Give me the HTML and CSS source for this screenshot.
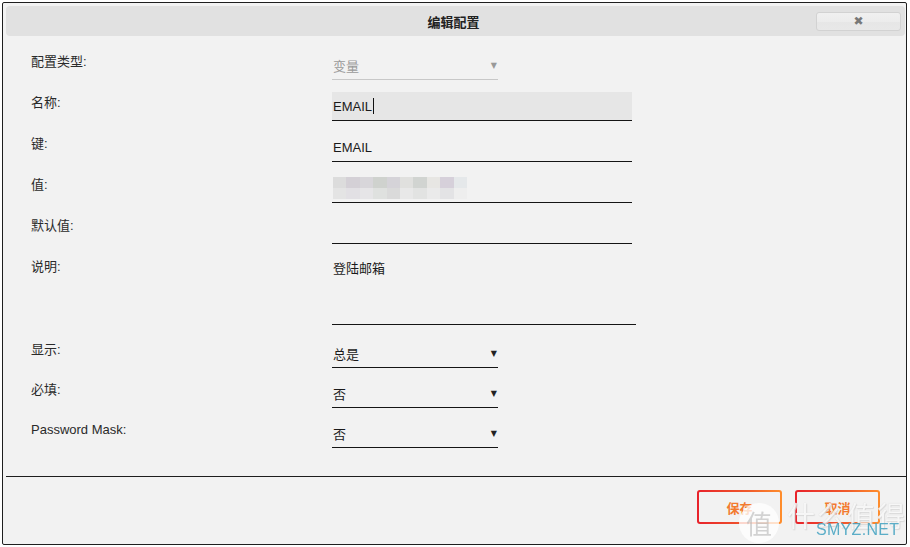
FILE: index.html
```html
<!DOCTYPE html>
<html lang="zh-CN">
<head>
    <meta charset="UTF-8">
    <title>编辑配置</title>
    <link rel="stylesheet" href="styles.css">
</head>
<body>

<div class="dialog">
    <!-- Title bar -->
    <div class="dialog-header">
        <span></span>
        <h1 class="dialog-title">编辑配置</h1>
        <button class="close-btn">&#x2716;</button>
    </div>

    <!-- Form -->
    <div class="form">
        <div class="row">
            <label>配置类型:</label>
            <div class="field select disabled"><span>变量</span><span class="arrow">&#x25BC;</span></div>
        </div>
        <div class="row">
            <label>名称:</label>
            <div class="field input focused"><span>EMAIL</span><span class="caret"></span></div>
        </div>
        <div class="row">
            <label>键:</label>
            <div class="field input"><span>EMAIL</span></div>
        </div>
        <div class="row">
            <label>值:</label>
            <div class="field input"><div class="blurred"></div></div>
        </div>
        <div class="row">
            <label>默认值:</label>
            <div class="field input"></div>
        </div>
        <div class="row row-tall">
            <label>说明:</label>
            <div class="field textarea"><span>登陆邮箱</span></div>
        </div>
        <div class="row row-compact">
            <label>显示:</label>
            <div class="field select"><span>总是</span><span class="arrow">&#x25BC;</span></div>
        </div>
        <div class="row row-compact">
            <label>必填:</label>
            <div class="field select"><span>否</span><span class="arrow">&#x25BC;</span></div>
        </div>
        <div class="row row-compact">
            <label>Password Mask:</label>
            <div class="field select"><span>否</span><span class="arrow">&#x25BC;</span></div>
        </div>
    </div>

    <!-- Buttons -->
    <div class="dialog-footer">
        <button class="btn">保存</button>
        <button class="btn">取消</button>
    </div>

    <!-- Site watermark -->
    <div class="watermark">
        <span class="wm-badge">值</span>
        <span class="wm-text">什么值得买</span>
        <span class="wm-site">SMYZ.NET</span>
    </div>
</div>

</body>
</html>
```

FILE: styles.css
```css
/* General page styling */
body {
    margin: 0;
    padding: 0;
    background-color: #fff;
    font-family: "Liberation Sans", "Noto Sans CJK SC", sans-serif;
    font-size: 13px;
    color: #222;
}

.dialog {
    position: relative;
    box-sizing: border-box;
    width: 905px;
    height: 543px;
    margin: 2px 0 0 2px;
    border: 1px solid #1e1e1e;
    border-radius: 2px;
    background-color: #f2f2f2;
    display: flex;
    flex-direction: column;
    overflow: hidden;
}

/* Title bar */
.dialog-header {
    height: 30px;
    margin: 3px 1px 0 3px;
    padding-right: 4px;
    background-color: #e1e1e1;
    border-radius: 4px;
    display: grid;
    grid-template-columns: 1fr auto 1fr;
    align-items: center;
}

.dialog-title {
    margin: 0;
    font-size: 13px;
    font-weight: bold;
    color: #222;
}

.close-btn {
    justify-self: end;
    width: 85px;
    height: 19px;
    padding: 0;
    border: 1px solid #d2d2d2;
    border-radius: 3px;
    background: linear-gradient(#f0f0f0 0%, #ececec 50%, #e6e6e6 51%, #e8e8e8 100%);
    color: #787878;
    font-family: "DejaVu Sans", sans-serif;
    font-size: 12px;
    line-height: 17px;
    cursor: pointer;
}

/* Form rows */
.form {
    flex: 1;
    padding: 15px 0 0 28px;
}

.row {
    display: flex;
    align-items: flex-start;
    margin-bottom: 12px;
}

.row-tall {
    margin-bottom: 14px;
}

.row-compact {
    margin-bottom: 11px;
}

.row label {
    width: 301px;
    flex-shrink: 0;
    padding-top: 1px;
    line-height: 20px;
    color: #2a2a2a;
}

.field {
    box-sizing: border-box;
    height: 29px;
    display: flex;
    align-items: center;
    border-bottom: 1px solid #151515;
    color: #1a1a1a;
}

.field.input {
    width: 300px;
    padding-left: 1px;
}

.field.focused {
    background-color: #e6e6e6;
}

.caret {
    display: inline-block;
    width: 0;
    height: 16px;
    margin-left: 1px;
    border-left: 1px solid #111;
}

.field.textarea {
    width: 304px;
    height: 69px;
    padding: 3px 0 0 1px;
    align-items: flex-start;
    line-height: 20px;
}

.field.select {
    width: 166px;
    padding: 0 1px 0 1px;
    justify-content: space-between;
}

.field.select.disabled {
    color: #9a9a9a;
    border-bottom-color: #c8c8c8;
}

.arrow {
    font-family: "DejaVu Sans", sans-serif;
    font-size: 8px;
    color: #222;
}

.disabled .arrow {
    color: #999;
}

/* Hidden (blurred) value */
.blurred {
    width: 134px;
    height: 22px;
    background:
        linear-gradient(90deg, #dcdcdc 0 10%, #d4d0d6 10% 20%, #d8d6da 20% 30%, #cfd2ce 30% 40%, #d5d3d8 40% 50%, #e0e0de 50% 60%, #d1d4d1 60% 70%, #e7e6e3 70% 80%, #d6d0da 80% 90%, #e5e8ea 90% 100%) top / 100% 50% no-repeat,
        linear-gradient(90deg, #e4e4e4 0 10%, #e2e0e4 10% 20%, #e6e5e7 20% 30%, #dfe1df 30% 40%, #dadada 40% 50%, #e8e8e8 50% 60%, #e2e3e2 60% 70%, #eaeaea 70% 80%, #e3e3e5 80% 90%, #eeeeee 90% 100%) bottom / 100% 50% no-repeat;
    filter: blur(0.6px);
}

/* Footer */
.dialog-footer {
    margin-left: 3px;
    border-top: 1px solid #1e1e1e;
    padding: 13px 26px 20px 0;
    display: flex;
    justify-content: flex-end;
    gap: 13px;
}

.btn {
    width: 85px;
    height: 34px;
    border: 2px solid transparent;
    border-radius: 3px;
    background:
        linear-gradient(#f2f2f2, #f2f2f2) padding-box,
        linear-gradient(90deg, #e8222b, #f05a2c 60%, #ff8e2c) border-box;
    color: #f37a2f;
    font-family: "Noto Sans CJK SC", sans-serif;
    font-size: 13px;
    font-weight: bold;
    cursor: pointer;
}

/* Watermark overlay */
.watermark {
    position: absolute;
    left: 728px;
    top: 486px;
    width: 176px;
    height: 55px;
    pointer-events: none;
    opacity: 0.9;
}

.wm-badge {
    position: absolute;
    left: 8px;
    top: 14px;
    width: 40px;
    height: 40px;
    border-radius: 50%;
    background-color: rgba(255, 255, 255, 0.85);
    color: #cfcfcf;
    font-family: "Noto Sans CJK SC", sans-serif;
    font-size: 26px;
    line-height: 40px;
    text-align: center;
}

.wm-text {
    position: absolute;
    left: 56px;
    top: 8px;
    color: rgba(255, 255, 255, 0.85);
    text-shadow: 0 0 1px #c8c8c8, 1px 1px 1px #d8d8d8;
    font-family: "Noto Sans CJK SC", sans-serif;
    font-size: 28px;
    line-height: 36px;
    letter-spacing: 2px;
    white-space: nowrap;
}

.wm-site {
    position: absolute;
    left: 85px;
    top: 32px;
    color: #4ba6c3;
    font-family: "Liberation Sans", sans-serif;
    font-size: 16px;
    line-height: 18px;
    letter-spacing: 0.3px;
}
```
